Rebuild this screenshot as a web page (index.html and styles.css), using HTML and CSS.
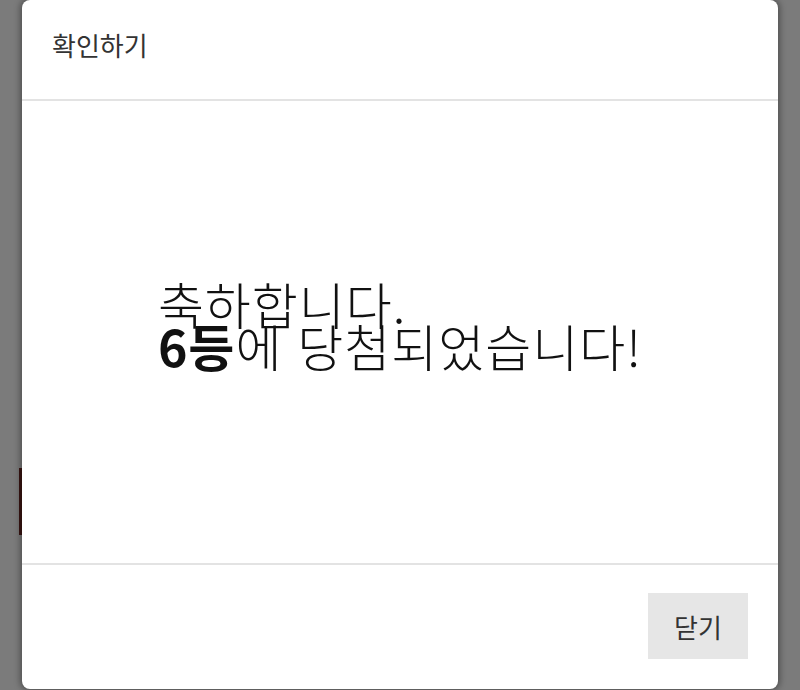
FILE: index.html
```html
<!DOCTYPE html>
<html lang="ko">
<head>
<meta charset="utf-8">
<title>확인하기</title>
<link rel="stylesheet" href="styles.css">
</head>
<body>
<div class="backdrop">
  <div class="behind-bar"></div>
  <div class="modal">
    <div class="modal-header">
      <h1 class="modal-title">확인하기</h1>
    </div>
    <div class="modal-body">
      <p class="message">축하합니다.<br><strong>6등</strong>에 당첨되었습니다!</p>
    </div>
    <div class="modal-footer">
      <button class="btn-close" type="button">닫기</button>
    </div>
  </div>
</div>
</body>
</html>
```

FILE: styles.css
```css
html, body {
  margin: 0;
  padding: 0;
  height: 100%;
}
body {
  font-family: "Noto Sans CJK KR", "Noto Sans", sans-serif;
  background: #7b7b7b;
  overflow: hidden;
}
.backdrop {
  position: relative;
  height: 690px;
  display: flex;
  justify-content: center;
}
.behind-bar {
  position: absolute;
  left: 19px;
  top: 468px;
  width: 6px;
  height: 67px;
  background: #3a1512;
}
.modal {
  position: relative;
  width: 756px;
  height: 689px;
  background: #fff;
  border-radius: 8px;
  box-shadow: 0 0 6px 2px rgba(0, 0, 0, 0.35);
  display: flex;
  flex-direction: column;
}
.modal-header {
  flex: none;
  height: 101px;
  border-bottom: 2px solid #e3e3e3;
  display: flex;
  align-items: center;
  padding: 0 30px;
  box-sizing: border-box;
}
.modal-title {
  margin: 0;
  font-size: 26px;
  font-weight: 400;
  color: #333;
  line-height: 1;
  position: relative;
  top: -5px;
}
.modal-body {
  flex: 1;
  display: flex;
  align-items: center;
  justify-content: center;
}
.message {
  margin: 0;
  font-size: 50px;
  font-weight: 300;
  line-height: 42px;
  color: #111;
  text-align: left;
  position: relative;
  top: -8px;
  letter-spacing: 1px;
}
.message strong {
  font-weight: 700;
}
.modal-footer {
  flex: none;
  height: 126px;
  border-top: 2px solid #e3e3e3;
  display: flex;
  align-items: center;
  justify-content: flex-end;
  padding: 0 30px;
  box-sizing: border-box;
}
.btn-close {
  width: 100px;
  height: 66px;
  border: none;
  background: #e6e6e6;
  font-family: "Noto Sans CJK KR", "Noto Sans", sans-serif;
  font-size: 26px;
  color: #333;
  padding: 0;
  margin-top: -2px;
}
```
